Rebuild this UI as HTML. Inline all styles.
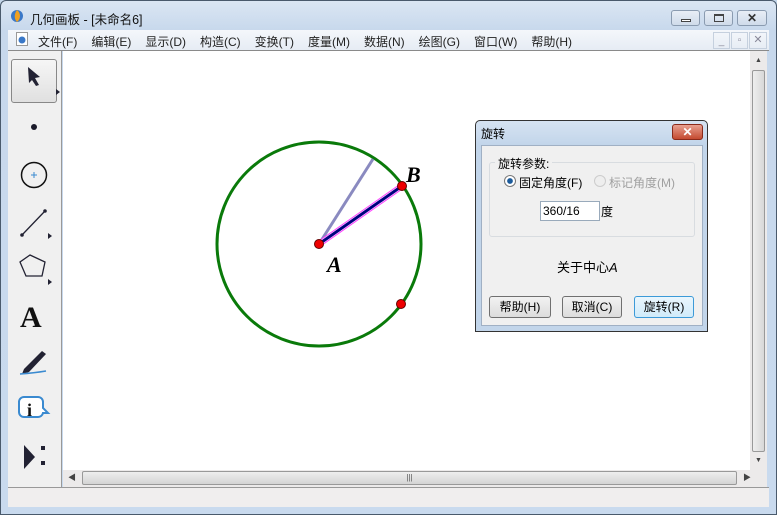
<!DOCTYPE html>
<html><head><meta charset="utf-8"><style>
*{box-sizing:border-box;margin:0;padding:0}
body{width:777px;height:515px;background:#c4d6ea;font-family:"Liberation Sans","Noto Sans CJK SC",sans-serif;font-size:12px;position:relative;overflow:hidden}
.abs{position:absolute}
#frame{left:0;top:0;width:777px;height:515px;border:1px solid #4a5a6c;border-radius:6px 6px 0 0;background:linear-gradient(#dbe6f3,#c7d8ec 30px,#c9daee)}
.menu span{margin-right:14px}
.wbtn{border:1px solid #8a9bb0;border-radius:3px;background:linear-gradient(#e8eef6,#cfdbea)}
.btn{position:absolute;top:296px;height:22px;border:1px solid #707070;border-radius:3px;background:linear-gradient(#f2f2f2,#dcdcdc);text-align:center;line-height:20px;font-size:12px}
</style></head><body>
<div id="frame" class="abs"></div>
<svg class="abs" style="left:10px;top:9px" width="14" height="14"><circle cx="7" cy="7" r="6" fill="#3a78c8"/><path d="M7 1 C11 4 11 10 7 13 C4 10 4 5 7 1Z" fill="#f0a020"/></svg>
<div class="abs" style="left:30px;top:9px;font-size:12.5px;color:#111">几何画板 - [未命名6]</div>
<div class="abs wbtn" style="left:671px;top:10px;width:29px;height:16px"><div class="abs" style="left:9px;top:8px;width:10px;height:3px;border:1px solid #444;background:#fff"></div></div>
<div class="abs wbtn" style="left:704px;top:10px;width:29px;height:16px"><div class="abs" style="left:9px;top:3px;width:10px;height:8px;border:1px solid #444;border-top-width:2px"></div></div>
<div class="abs wbtn" style="left:737px;top:10px;width:30px;height:16px;text-align:center;line-height:14px;font-weight:bold;color:#333">✕</div>
<div class="abs" style="left:8px;top:30px;width:761px;height:20px;background:linear-gradient(#f4f7fb,#e6ecf4)"></div>
<svg class="abs" style="left:16px;top:32px" width="12" height="14"><rect x="0.5" y="0.5" width="11" height="13" fill="#fff" stroke="#999"/><circle cx="6" cy="8" r="3.5" fill="#3a78c8"/></svg>
<div class="abs menu" style="left:38px;top:33px;color:#222;white-space:nowrap;font-size:12px"><span>文件(F)</span><span>编辑(E)</span><span>显示(D)</span><span>构造(C)</span><span>变换(T)</span><span>度量(M)</span><span>数据(N)</span><span>绘图(G)</span><span>窗口(W)</span><span>帮助(H)</span></div>
<div class="abs" style="left:713px;top:32px;width:17px;height:17px;border:1px solid #c5d0de;color:#889;text-align:center;font-size:10px;line-height:18px">_</div>
<div class="abs" style="left:731px;top:32px;width:17px;height:17px;border:1px solid #c5d0de;color:#889;text-align:center;font-size:10px;line-height:15px">▫</div>
<div class="abs" style="left:749px;top:32px;width:18px;height:17px;border:1px solid #c5d0de;color:#889;text-align:center;font-size:11px;line-height:15px">✕</div>
<div class="abs" style="left:8px;top:50px;width:761px;height:1px;background:#8a8a8a"></div>
<!-- toolbar -->
<div class="abs" style="left:8px;top:51px;width:54px;height:436px;background:#f0f0f0;border-right:1px solid #999"></div>
<div class="abs" style="left:11px;top:59px;width:46px;height:44px;border:1px solid #888;border-radius:3px;background:linear-gradient(#f6f6f6,#e0e0e0)"></div>
<svg class="abs" style="left:8px;top:51px" width="54" height="430">
<path d="M20 16 L32 26 L27 27 L31 34 L28 35 L24 29 L21 32Z" fill="#223"/>
<path d="M48 38 L52 41 L48 44Z" fill="#223"/>
<circle cx="26" cy="76" r="3" fill="#1a1a2a"/>
<circle cx="26" cy="124" r="12.5" fill="none" stroke="#111" stroke-width="1.5"/>
<path d="M23 124h6M26 121v6" stroke="#3a8ad0"/>
<path d="M14 184 L37 160" stroke="#223" stroke-width="1.3"/><circle cx="14" cy="184" r="1.8" fill="#223"/><circle cx="37" cy="160" r="1.8" fill="#223"/>
<path d="M40 182 L44 185 L40 188Z" fill="#223"/>
<path d="M22 204 L37 211 L34 225 L18 225 L12 211Z" fill="none" stroke="#223" stroke-width="1.3"/>
<path d="M40 228 L44 231 L40 234Z" fill="#223"/>
<text x="12" y="276" font-family="Liberation Serif" font-weight="bold" font-size="30" fill="#111">A</text>
<path d="M16 318 L34 300 L38 303 L21 321 L14 323Z" fill="#223"/><path d="M12 323 Q26 322 38 320" stroke="#3a8ad0" stroke-width="1.5" fill="none"/>
<path d="M16 346 h14 a5 5 0 0 1 5 5 v6 l5 5 h-5 a5 5 0 0 1 -5 4 h-14 a5 5 0 0 1 -5 -5 v-10 a5 5 0 0 1 5 -5z" fill="#fff" stroke="#3a8ad0" stroke-width="2"/>
<text x="19" y="365" font-family="Liberation Serif" font-weight="bold" font-size="18" fill="#111">i</text>
<path d="M16 394 L27 406 L16 418Z" fill="#223"/><rect x="33" y="395" width="4" height="4" fill="#223"/><rect x="33" y="410" width="4" height="4" fill="#223"/>
</svg>
<!-- canvas -->
<div class="abs" style="left:63px;top:51px;width:687px;height:419px;background:#fff"></div>
<svg class="abs" style="left:0;top:0" width="777" height="515">
<circle cx="319" cy="244" r="102" fill="none" stroke="#0a7a0a" stroke-width="3"/>
<line x1="319" y1="244" x2="373" y2="159" stroke="#8a8ac0" stroke-width="3"/>
<line x1="319" y1="244" x2="402" y2="186" stroke="#ff40ff" stroke-width="6"/>
<line x1="319" y1="244" x2="402" y2="186" stroke="#fff" stroke-width="4"/>
<line x1="319" y1="244" x2="402" y2="186" stroke="#000080" stroke-width="3"/>
<circle cx="319" cy="244" r="4.5" fill="#e00" stroke="#600" stroke-width="1"/>
<circle cx="402" cy="186" r="4.5" fill="#e00" stroke="#600" stroke-width="1"/>
<circle cx="401" cy="304" r="4.5" fill="#e00" stroke="#600" stroke-width="1"/>
<text x="327" y="272" font-family="Liberation Serif" font-style="italic" font-weight="bold" font-size="22">A</text>
<text x="406" y="182" font-family="Liberation Serif" font-style="italic" font-weight="bold" font-size="22">B</text>
</svg>
<!-- scrollbars -->
<div class="abs" style="left:750px;top:51px;width:17px;height:419px;background:#eceaea"></div>
<div class="abs" style="left:752px;top:70px;width:13px;height:382px;border:1px solid #999;border-radius:2px;background:linear-gradient(90deg,#eee,#d8d8d8)"></div>
<div class="abs" style="left:755px;top:57px;font-size:7px;color:#444">▲</div>
<div class="abs" style="left:755px;top:457px;font-size:7px;color:#444">▼</div>
<div class="abs" style="left:63px;top:470px;width:704px;height:17px;background:#eceaea"></div>
<div class="abs" style="left:82px;top:471px;width:655px;height:14px;border:1px solid #999;border-radius:2px;background:linear-gradient(#eee,#d4d4d4);text-align:center;font-size:8px;line-height:12px;color:#555">|||</div>
<div class="abs" style="left:68px;top:472px;font-size:8px;color:#444">◀</div>
<div class="abs" style="left:743px;top:472px;font-size:8px;color:#444">▶</div>
<div class="abs" style="left:8px;top:487px;width:761px;height:1px;background:#999"></div>
<div class="abs" style="left:8px;top:488px;width:761px;height:19px;background:#f0eeee"></div>
<!-- dialog -->
<div class="abs" style="left:475px;top:120px;width:233px;height:212px;border:1px solid #333;border-radius:5px 5px 0 0;background:linear-gradient(#d6e3f2,#c2d5ea 24px,#c2d5ea)"></div>
<div class="abs" style="left:481px;top:125px;font-size:12px">旋转</div>
<div class="abs" style="left:672px;top:124px;width:31px;height:16px;border:1px solid #8a2a1a;border-radius:3px;background:linear-gradient(#e8a090,#c44a30);color:#fff;font-weight:bold;text-align:center;line-height:14px">✕</div>
<div class="abs" style="left:481px;top:145px;width:222px;height:181px;background:#f0f0f0;border:1px solid #a0b0c4"></div>
<div class="abs" style="left:489px;top:162px;width:206px;height:75px;border:1px solid #d8dce0;border-radius:3px"></div>
<div class="abs" style="left:495px;top:155px;background:#f0f0f0;padding:0 3px;font-size:12px">旋转参数:</div>
<div class="abs" style="left:504px;top:175px;width:12px;height:12px;border-radius:50%;border:1px solid #777;background:radial-gradient(#1a5a9a 35%,#fff 45%)"></div>
<div class="abs" style="left:519px;top:174px;font-size:12px">固定角度(F)</div>
<div class="abs" style="left:594px;top:175px;width:12px;height:12px;border-radius:50%;border:1px solid #ccc;background:#eee"></div>
<div class="abs" style="left:609px;top:174px;font-size:12px;color:#a0a0a0">标记角度(M)</div>
<div class="abs" style="left:540px;top:201px;width:60px;height:20px;border:1px solid #9ab;background:#fff;padding-left:2px;line-height:18px;font-size:12px">360/16</div>
<div class="abs" style="left:601px;top:203px;font-size:12px">度</div>
<div class="abs" style="left:557px;top:257px;font-size:13px">关于中心<i>A</i></div>
<div class="btn" style="left:489px;width:62px">帮助(H)</div>
<div class="btn" style="left:562px;width:60px">取消(C)</div>
<div class="btn" style="left:634px;width:60px;border-color:#3c9ad8;background:linear-gradient(#eaf6fd,#d0ebfa)">旋转(R)</div>
</body></html>
